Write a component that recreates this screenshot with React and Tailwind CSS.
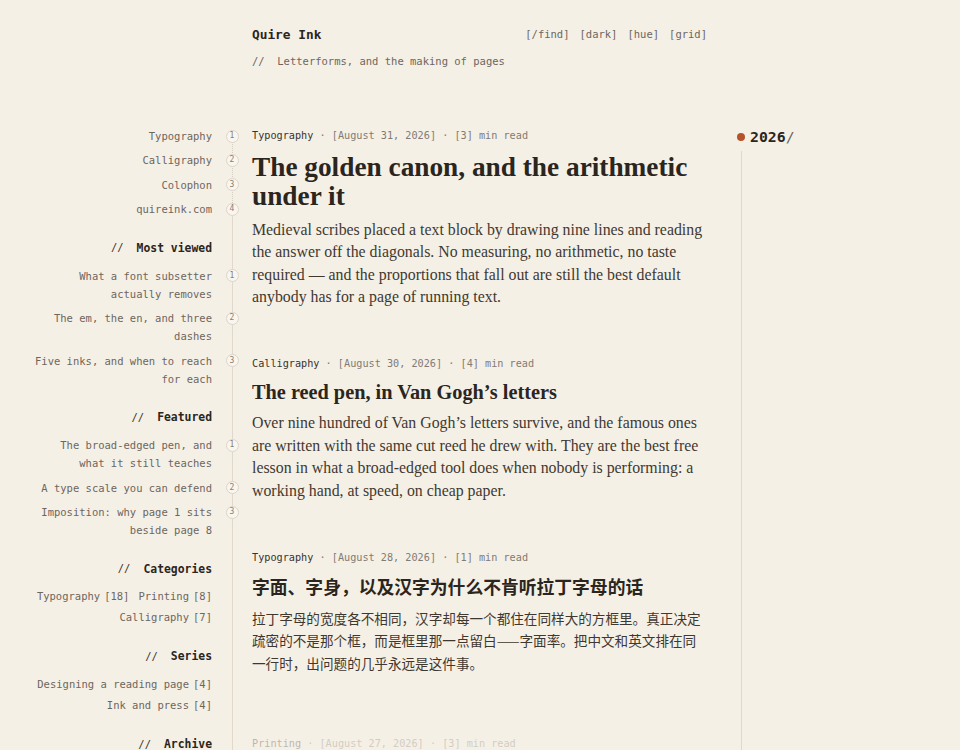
import React from "react";

function Circle({ n }) {
  return (
    <span className="relative flex h-[13px] w-[13px] items-center justify-center rounded-full border border-[#ddd5c8] bg-[#f9f6ef] text-[8px] leading-none text-[#857e75]">
      {n}
    </span>
  );
}

function Row({ n, children }) {
  return (
    <div className="flex">
      <div className="flex-1 text-right">{children}</div>
      <div className="flex w-[40px] shrink-0 items-start justify-center">
        <div className="flex h-[24.3px] items-center">
          <Circle n={n} />
        </div>
      </div>
    </div>
  );
}

function SectionHead({ label, className }) {
  return (
    <div className={`flex h-[18px] items-center justify-end pr-[40px] ${className}`}>
      <span className="text-[10.5px] text-[#3a332c]">//</span>
      <span className="ml-[13px] text-[11.4px] font-bold text-[#2b2520]">{label}</span>
    </div>
  );
}

function ListItem({ n, children }) {
  return (
    <div className="flex">
      <div className="flex-1 text-right text-[10.5px] leading-[18px] text-[#6d665e]">{children}</div>
      <div className="flex w-[40px] shrink-0 justify-center">
        <div className="flex h-[18px] items-center">
          <Circle n={n} />
        </div>
      </div>
    </div>
  );
}

function Tag({ name, count }) {
  return (
    <span className="whitespace-nowrap">
      {name}
      <span className="ml-[4px]">[{count}]</span>
    </span>
  );
}

function Meta({ cat, date, mins }) {
  return (
    <div className="h-[16px] whitespace-pre text-[10.2px] leading-[16px] text-[#837b71]">
      <span className="text-[#3a332c]">{cat}</span>
      {" · [" + date + "] · [" + mins + "] min read"}
    </div>
  );
}

export default function App() {
  return (
    <div className="h-[750px] overflow-hidden bg-[#f5f0e6] font-['DejaVu_Sans_Mono',monospace] text-[#2b2520]">
      <header className="ml-[252px] w-[455px] pt-[25px]">
        <div className="flex h-[20px] items-center justify-between">
          <span className="text-[12.8px] font-bold text-[#2b2520]">Quire Ink</span>
          <nav className="flex gap-[10px] text-[10.5px] text-[#6d665e]">
            <span>[/find]</span>
            <span>[dark]</span>
            <span>[hue]</span>
            <span>[grid]</span>
          </nav>
        </div>
        <div className="mt-[8px] h-[16px] whitespace-pre text-[10.5px] leading-[16px] text-[#6d665e]">
          {"//  Letterforms, and the making of pages"}
        </div>
      </header>

      <div className="mt-[55px] flex">
        <aside className="relative w-[252px] shrink-0 pl-[32px]">
          <div className="absolute left-[231.5px] top-[12px] h-[73px] w-0 border-l border-dotted border-[#d6cec1]" />
          <div className="absolute left-[231.5px] top-[85px] h-[800px] w-px bg-[#e0d8cb]" />

          <div className="text-[10.5px] text-[#6d665e]">
            <Row n={1}>
              <span className="leading-[24.3px]">Typography</span>
            </Row>
            <Row n={2}>
              <span className="leading-[24.3px]">Calligraphy</span>
            </Row>
            <Row n={3}>
              <span className="leading-[24.3px]">Colophon</span>
            </Row>
            <Row n={4}>
              <span className="leading-[24.3px]">quireink.com</span>
            </Row>
          </div>

          <SectionHead label="Most viewed" className="mt-[18px]" />
          <div className="mt-[9.5px] flex flex-col gap-[6.5px]">
            <ListItem n={1}>What a font subsetter actually removes</ListItem>
            <ListItem n={2}>The em, the en, and three dashes</ListItem>
            <ListItem n={3}>Five inks, and when to reach for each</ListItem>
          </div>

          <SectionHead label="Featured" className="mt-[21px]" />
          <div className="mt-[9.5px] flex flex-col gap-[6.5px]">
            <ListItem n={1}>The broad-edged pen, and what it still teaches</ListItem>
            <ListItem n={2}>A type scale you can defend</ListItem>
            <ListItem n={3}>Imposition: why page 1 sits beside page 8</ListItem>
          </div>

          <SectionHead label="Categories" className="mt-[21px]" />
          <div className="mr-[40px] mt-[8px] flex flex-wrap justify-end gap-x-[9px] text-[10.5px] leading-[21px] text-[#6d665e]">
            <Tag name="Typography" count="18" />
            <Tag name="Printing" count="8" />
            <Tag name="Calligraphy" count="7" />
          </div>

          <SectionHead label="Series" className="mt-[19.5px]" />
          <div className="mr-[40px] mt-[8px] flex flex-col items-end text-[10.5px] leading-[21.3px] text-[#6d665e]">
            <Tag name="Designing a reading page" count="4" />
            <Tag name="Ink and press" count="4" />
          </div>

          <SectionHead label="Archive" className="mt-[19.5px]" />
          <div className="mr-[40px] mt-[8px] flex flex-col items-end text-[10.5px] leading-[21px] text-[#6d665e]">
            <span>August 2026 [4]</span>
            <span>July 2026 [9]</span>
          </div>
        </aside>

        <main className="w-[455px] shrink-0 pt-[4px]">
          <article>
            <Meta cat="Typography" date="August 31, 2026" mins="3" />
            <h2 className="mt-[9px] font-['Liberation_Serif',serif] text-[27.3px] font-bold leading-[29.3px] text-[#2b2520]">
              The golden canon, and the arithmetic under it
            </h2>
            <p className="mt-[7px] font-['Liberation_Serif',serif] text-[15.85px] leading-[22.6px] text-[#3f3831]">
              Medieval scribes placed a text block by drawing nine lines and reading the answer off the diagonals. No measuring, no arithmetic, no taste required — and the proportions that fall out are still the best default anybody has for a page of running text.
            </p>
          </article>

          <article className="mt-[47px]">
            <Meta cat="Calligraphy" date="August 30, 2026" mins="4" />
            <h2 className="mt-[7.2px] font-['Liberation_Serif',serif] text-[20.3px] font-bold leading-[26px] text-[#2b2520]">
              The reed pen, in Van Gogh’s letters
            </h2>
            <p className="mt-[7.3px] font-['Liberation_Serif',serif] text-[15.85px] leading-[22.4px] text-[#3f3831]">
              Over nine hundred of Van Gogh’s letters survive, and the famous ones are written with the same cut reed he drew with. They are the best free lesson in what a broad-edged tool does when nobody is performing: a working hand, at speed, on cheap paper.
            </p>
          </article>

          <article className="mt-[47.6px]">
            <Meta cat="Typography" date="August 28, 2026" mins="1" />
            <h2 className="mt-[9px] font-['Liberation_Serif','Noto_Sans_CJK_SC',sans-serif] text-[17.8px] font-bold leading-[26px] text-[#2b2520]">
              字面、字身，以及汉字为什么不肯听拉丁字母的话
            </h2>
            <p className="mt-[6.5px] font-['Noto_Sans_CJK_SC',sans-serif] text-[13.6px] leading-[22.2px] text-[#3f3831]">
              拉丁字母的宽度各不相同，汉字却每一个都住在同样大的方框里。真正决定疏密的不是那个框，而是框里那一点留白——字面率。把中文和英文排在同一行时，出问题的几乎永远是这件事。
            </p>
          </article>

          <article className="mt-[62px] opacity-30">
            <Meta cat="Printing" date="August 27, 2026" mins="3" />
            <h2 className="mt-[7.2px] font-['Liberation_Serif',serif] text-[20.3px] font-bold leading-[26px] text-[#2b2520]">
              Imposition, folded by hand
            </h2>
          </article>
        </main>

        <aside className="shrink-0 pl-[30px] pt-[3px]">
          <div className="flex h-[20px] items-center">
            <span className="h-[8px] w-[8px] rounded-full bg-[#b5542a]" />
            <span className="ml-[5px] text-[14.8px] font-bold text-[#2b2520]">
              2026<span className="font-normal text-[#6d665e]">/</span>
            </span>
          </div>
          <div className="ml-[3.5px] mt-[4px] h-[700px] w-px bg-[#e0d8cb]" />
        </aside>
      </div>
    </div>
  );
}
